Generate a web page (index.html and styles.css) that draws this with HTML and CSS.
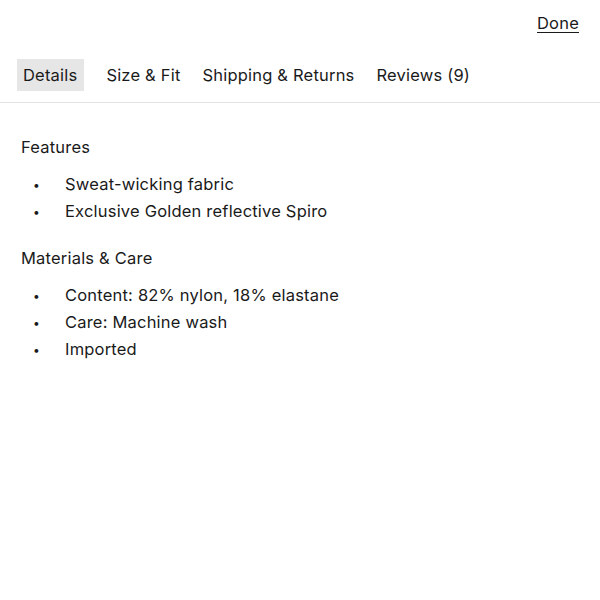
FILE: index.html
```html
<!DOCTYPE html>
<html>
<head>
<meta charset="utf-8">
<link rel="stylesheet" href="styles.css">
</head>
<body>
<div class="top">
  <a class="done" href="#">Done</a>
</div>
<nav class="tabs">
  <span class="tab active">Details</span>
  <span class="tab">Size &amp; Fit</span>
  <span class="tab">Shipping &amp; Returns</span>
  <span class="tab">Reviews (9)</span>
</nav>
<main class="content">
  <h3 class="heading">Features</h3>
  <ul class="list">
    <li>Sweat-wicking fabric</li>
    <li>Exclusive Golden reflective Spiro</li>
  </ul>
  <h3 class="heading">Materials &amp; Care</h3>
  <ul class="list">
    <li>Content: 82% nylon, 18% elastane</li>
    <li>Care: Machine wash</li>
    <li>Imported</li>
  </ul>
</main>
</body>
</html>
```
FILE: styles.css
```css
html, body {
  margin: 0;
  padding: 0;
  background: #fff;
}
body {
  font-family: Inter, sans-serif;
  font-size: 16.5px;
  letter-spacing: 0.2px;
  color: #1a1a1a;
}
.top {
  display: flex;
  justify-content: flex-end;
  padding: 12px 21px 0 0;
  height: 47px;
  box-sizing: border-box;
}
.done {
  color: #1a1a1a;
  text-decoration: underline;
  text-underline-offset: 3px;
  line-height: 22px;
}
.tabs {
  display: flex;
  align-items: center;
  gap: 10px;
  padding: 12px 17px 11px;
  border-bottom: 1px solid #e2e2e2;
}
.tab {
  padding: 5px 6px;
  line-height: 22px;
}
.tab.active {
  background: #e6e6e6;
  padding-right: 7px;
  margin-right: 6px;
}
.content {
  padding: 33px 21px;
}
.heading {
  margin: 0;
  font-weight: 400;
  font-size: inherit;
  line-height: 22px;
}
.list {
  list-style: none;
  margin: 13px 0 22px;
  padding-left: 12px;
}
.list li {
  display: flex;
  line-height: 27px;
}
.list li::before {
  content: "\2022";
  width: 32px;
  flex: none;
  font-size: 12px;
}
```
